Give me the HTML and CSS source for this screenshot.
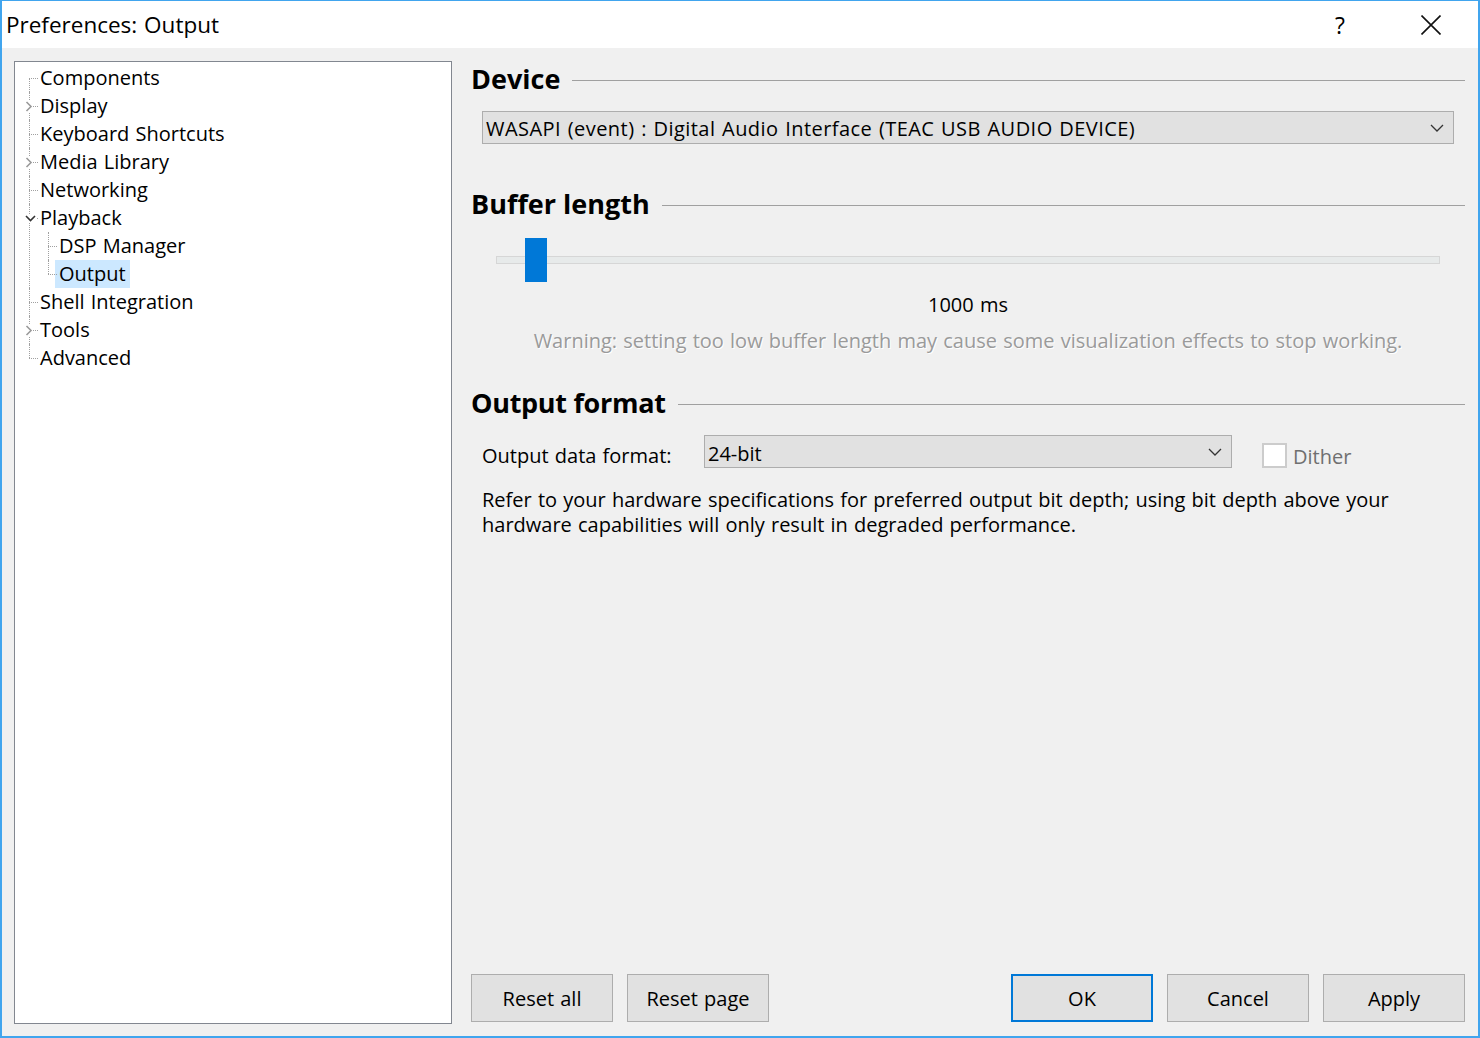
FILE: index.html
```html
<!DOCTYPE html>
<html>
<head>
<meta charset="utf-8">
<link rel="stylesheet" href="styles.css">
</head>
<body>
<div class="window">
  <div class="titlebar">
    <span class="title">Preferences: Output</span>
    <div class="title-btns">
      <span class="tb help">?</span>
      <span class="tb close"><svg width="20" height="20" viewBox="0 0 20 20"><path d="M0.5 0.5 L19.5 19.5 M19.5 0.5 L0.5 19.5" stroke="#111" stroke-width="1.6" fill="none"/></svg></span>
    </div>
  </div>
  <div class="body">
    <div class="tree">
      <ul class="tree-root">
        <li><span class="label">Components</span></li>
        <li><span class="exp"><svg width="8" height="11" viewBox="0 0 8 11"><path d="M1.5 1 L6 5.5 L1.5 10" stroke="#9a9a9a" stroke-width="1.6" fill="none"/></svg></span><span class="label">Display</span></li>
        <li><span class="label">Keyboard Shortcuts</span></li>
        <li><span class="exp"><svg width="8" height="11" viewBox="0 0 8 11"><path d="M1.5 1 L6 5.5 L1.5 10" stroke="#9a9a9a" stroke-width="1.6" fill="none"/></svg></span><span class="label">Media Library</span></li>
        <li><span class="label">Networking</span></li>
        <li><span class="exp open"><svg width="11" height="7" viewBox="0 0 11 7"><path d="M1 1 L5.5 5.5 L10 1" stroke="#333" stroke-width="1.6" fill="none"/></svg></span><span class="label">Playback</span>
          <ul class="children">
            <li><span class="label">DSP Manager</span></li>
            <li><span class="label"><span class="sel">Output</span></span></li>
          </ul>
        </li>
        <li><span class="label">Shell Integration</span></li>
        <li><span class="exp"><svg width="8" height="11" viewBox="0 0 8 11"><path d="M1.5 1 L6 5.5 L1.5 10" stroke="#9a9a9a" stroke-width="1.6" fill="none"/></svg></span><span class="label">Tools</span></li>
        <li><span class="label">Advanced</span></li>
      </ul>
    </div>
    <div class="page">
      <h2 class="group-title first"><span>Device</span></h2>
      <div class="combo wide">
        <span class="combo-text device">WASAPI (event) : Digital Audio Interface (TEAC USB AUDIO DEVICE)</span>
        <svg class="chev" width="14" height="8" viewBox="0 0 14 8"><path d="M1 1 L7 7 L13 1" stroke="#333" stroke-width="1.3" fill="none"/></svg>
      </div>

      <h2 class="group-title buffer"><span>Buffer length</span></h2>
      <div class="slider">
        <div class="track"></div>
        <div class="thumb"></div>
      </div>
      <div class="value">1000 ms</div>
      <div class="warning">Warning: setting too low buffer length may cause some visualization effects to stop working.</div>

      <h2 class="group-title format"><span>Output format</span></h2>
      <div class="format-row">
        <span class="field-label">Output data format:</span>
        <div class="combo narrow">
          <span class="combo-text">24-bit</span>
          <svg class="chev" width="14" height="8" viewBox="0 0 14 8"><path d="M1 1 L7 7 L13 1" stroke="#333" stroke-width="1.3" fill="none"/></svg>
        </div>
        <span class="checkbox"></span>
        <span class="check-label">Dither</span>
      </div>
      <p class="note">Refer to your hardware specifications for preferred output bit depth; using bit depth above your<br>hardware capabilities will only result in degraded performance.</p>

      <div class="buttons">
        <div class="btn-group">
          <button class="btn">Reset all</button>
          <button class="btn">Reset page</button>
        </div>
        <div class="btn-group">
          <button class="btn default">OK</button>
          <button class="btn">Cancel</button>
          <button class="btn">Apply</button>
        </div>
      </div>
    </div>
  </div>
</div>
</body>
</html>
```
FILE: styles.css
```css
* { box-sizing: border-box; }
html, body { margin: 0; padding: 0; }
body {
  font-family: "Open Sans", "Noto Sans", sans-serif;
  font-size: 20px;
  word-spacing: 1px;
  color: #000;
  background: #fff;
}
.window {
  width: 1480px;
  height: 1038px;
  border: 2px solid #41a5ee;
  border-top-width: 1px;
  display: flex;
  flex-direction: column;
  background: #f0f0f0;
}
.titlebar {
  height: 47px;
  background: #fff;
  display: flex;
  align-items: center;
  padding-left: 4px;
}
.title { flex: 1; font-size: 22.5px; }
.title-btns { display: flex; align-items: center; padding-right: 24px; }
.tb { width: 46px; display: flex; justify-content: center; align-items: center; }
.help { font-size: 23px; margin-right: 45px; }
.close svg { display: block; }

.body {
  flex: 1;
  display: grid;
  grid-template-columns: 438px 1fr;
  column-gap: 19px;
  padding: 13px 13px 12px 12px;
  min-height: 0;
}
.tree {
  background: #fff;
  border: 1px solid #828790;
}
.tree ul { list-style: none; margin: 0; padding: 0; }
.tree-root { padding-top: 2px !important; }
.tree li { position: relative; }
.tree li::before {
  content: "";
  position: absolute;
  left: 14px;
  top: 14px;
  width: 9px;
  border-top: 1px dotted #a0a0a0;
}
.tree li::after {
  content: "";
  position: absolute;
  left: 14px;
  top: 0;
  height: 100%;
  border-left: 1px dotted #a0a0a0;
}
.tree-root > li:first-child::after { top: 14px; height: calc(100% - 14px); }
.tree li:last-child::after { height: 14px; }
.label {
  display: block;
  height: 28px;
  line-height: 28px;
  padding-left: 25px;
  white-space: nowrap;
}
.children { margin-left: 19px !important; }
.sel {
  background: #cce8ff;
  display: inline-block;
  padding: 0 4px;
  margin-left: -4px;
}
.exp {
  position: absolute;
  left: 10px;
  top: 9px;
  width: 8px;
  height: 11px;
  background: #fff;
  z-index: 1;
  display: flex;
  align-items: center;
  justify-content: center;
}
.exp svg { display: block; }
.exp.open { left: 9px; top: 10px; width: 12px; height: 8px; }

.page {
  display: flex;
  flex-direction: column;
  min-height: 0;
}
.group-title {
  margin: 0;
  height: 32px;
  display: flex;
  align-items: center;
  font-size: 27px;
  font-weight: 700;
  word-spacing: 0;
  line-height: 32px;
}
.group-title span { position: relative; top: -1px; }
.group-title.format span { letter-spacing: -0.3px; }
.group-title::after {
  content: "";
  flex: 1;
  border-top: 1px solid #a0a0a0;
  margin-left: 12px;
}
.group-title.first { margin-top: 3px; }
.group-title.buffer { margin-top: 45px; }
.group-title.format { margin-top: 35px; }

.combo {
  height: 33px;
  background: #e1e1e1;
  border: 1px solid #adadad;
  display: flex;
  align-items: center;
  padding-left: 3px;
  padding-right: 9px;
}
.combo-text { flex: 1; white-space: nowrap; position: relative; top: 1px; }
.combo.narrow .combo-text { top: 2px; }
.combo-text.device { letter-spacing: 0.45px; }
.chev { display: block; }
.combo.wide { margin: 15px 11px 0 11px; }

.slider {
  position: relative;
  height: 44px;
  margin: 17px 25px 0 25px;
  display: flex;
  align-items: center;
}
.track {
  flex: 1;
  height: 8px;
  background: #e7eaea;
  border: 1px solid #d6d6d6;
}
.thumb {
  position: absolute;
  left: 29px;
  top: 0;
  width: 22px;
  height: 44px;
  background: #0078d7;
}
.value {
  text-align: center;
  line-height: 25px;
  margin: 10px 25px 0 25px;
}
.warning {
  text-align: center;
  line-height: 25px;
  margin: 11px 25px 0 25px;
  color: #9a9a9a;
  text-shadow: 1px 1px 0 #fff;
  white-space: nowrap;
}

.format-row {
  display: flex;
  align-items: flex-start;
  margin: 15px 11px 0 11px;
  height: 33px;
}
.field-label { width: 222px; line-height: 25px; margin-top: 8px; }
.combo.narrow { width: 528px; padding-right: 9px; }
.checkbox {
  width: 25px;
  height: 25px;
  margin: 8px 0 0 30px;
  border: 2px solid #cccccc;
  background: #fff;
}
.check-label { margin: 9px 0 0 6px; line-height: 25px; color: #6f6f6f; }

.note {
  margin: 19px 11px 0 11px;
  line-height: 25px;
}

.buttons {
  margin-top: auto;
  margin-bottom: 2px;
  display: flex;
  justify-content: space-between;
}
.btn-group { display: flex; gap: 14px; }
.btn {
  width: 142px;
  height: 48px;
  background: #e1e1e1;
  border: 1px solid #adadad;
  font-family: inherit;
  font-size: 20px;
  word-spacing: 1px;
  color: #000;
  padding: 0;
}
.btn.default { border: 2px solid #0078d7; }
```
